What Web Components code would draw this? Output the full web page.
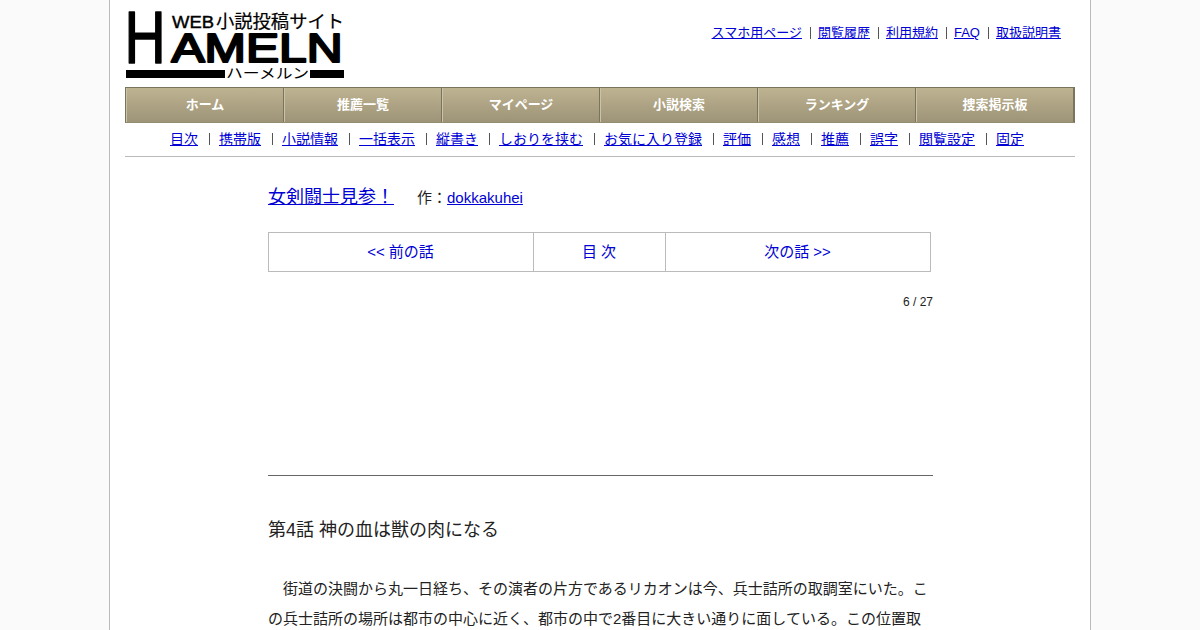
<!DOCTYPE html>
<html lang="ja">
<head>
<meta charset="utf-8">
<title>女剣闘士見参! - 第4話 神の血は獣の肉になる</title>
<style>
	html {
		overflow: hidden;
	}
	body {
		margin: 0;
		background: #fafafa;
		color: #222;
		font: 15px/1.5 "Liberation Sans", "Noto Sans CJK JP", sans-serif;
	}
</style>
</head>
<body>
<hm-page>
	<hm-header slot="header">
		<hm-logo></hm-logo>
		<hm-links links="スマホ用ページ,閲覧履歴,利用規約,FAQ,取扱説明書"></hm-links>
	</hm-header>
	<hm-menu slot="header" items="ホーム,推薦一覧,マイページ,小説検索,ランキング,捜索掲示板"></hm-menu>
	<hm-links slot="header" class="sub" links="目次,携帯版,小説情報,一括表示,縦書き,しおりを挟む,お気に入り登録,評価,感想,推薦,誤字,閲覧設定,固定"></hm-links>
	<hm-title author="dokkakuhei">女剣闘士見参！</hm-title>
	<hm-pager></hm-pager>
	<hm-chapter count="6 / 27">
		<span slot="heading">第4話 神の血は獣の肉になる</span>
		　街道の決闘から丸一日経ち、その演者の片方であるリカオンは今、兵士詰所の取調室にいた。この兵士詰所の場所は都市の中心に近く、都市の中で2番目に大きい通りに面している。この位置取
	</hm-chapter>
</hm-page>
<script>
(function() {
	function define(name, html, setup) {
		const template = document.createElement("template");
		template.innerHTML = html;
		customElements.define(name, class extends HTMLElement {
			constructor() {
				super();
				this.attachShadow({mode: "open"});
				this.shadowRoot.appendChild(template.content.cloneNode(true));
			}

			connectedCallback() {
				if (setup) {
					setup(this, this.shadowRoot);
				}
			}
		});
	}

	function fillLinks(root, list) {
		root.querySelector("nav").replaceChildren(...list.split(",").map(function(text) {
			const a = document.createElement("a");
			a.href = "#";
			a.textContent = text;
			return a;
		}));
	}

	define("hm-page", `
		<style>
		:host {
			display: block;
			box-sizing: border-box;
			width: 982px;
			height: 630px;
			margin: 0 auto;
			padding: 0 15px;
			overflow: hidden;
			border: solid #bbb;
			border-width: 0 1px;
			background: #fff;
		}
		main {
			width: 665px;
			margin: 0 142px 0 143px;
		}
		</style>
		<slot name="header"></slot>
		<main><slot></slot></main>
	`);

	define("hm-header", `
		<style>
		:host {
			display: flex;
			justify-content: space-between;
			align-items: flex-start;
			height: 87px;
		}
		::slotted(hm-links) {
			margin: 23px 14px 0 0;
		}
		</style>
		<slot></slot>
	`);

	define("hm-logo", `
		<style>
		:host {
			display: block;
			width: 220px;
			height: 87px;
		}
		svg {
			display: block;
			overflow: visible;
		}
		text {
			font-family: "Liberation Sans", "Noto Sans CJK JP", sans-serif;
		}
		.latin {
			font-family: "Liberation Sans", sans-serif;
			stroke: #000;
			stroke-linejoin: round;
		}
		</style>
		<svg width="220" height="87" viewBox="0 0 220 87">
			<text class="latin" transform="translate(-.5 63.3) scale(.76 1)" font-size="75" stroke-width="1.6">H</text>
			<text class="latin" x="46.5" y="61.8" font-size="41" textLength="171" lengthAdjust="spacingAndGlyphs" stroke-width="2.2">AMELN</text>
			<text x="47" y="28" font-size="17" textLength="42" lengthAdjust="spacingAndGlyphs" stroke="#000" stroke-width=".4">WEB</text>
			<text x="91" y="28" font-size="18" textLength="128" lengthAdjust="spacingAndGlyphs" stroke="#000" stroke-width=".2">小説投稿サイト</text>
			<rect x="1" y="70" width="99" height="8"/>
			<text x="101" y="78" font-size="14" textLength="83" lengthAdjust="spacingAndGlyphs">ハーメルン</text>
			<rect x="185" y="70" width="34" height="8"/>
		</svg>
	`);

	define("hm-links", `
		<style>
		:host {
			display: block;
			font-size: 13px;
			line-height: 20px;
		}
		nav {
			display: flex;
			justify-content: center;
		}
		a {
			display: flex;
			align-items: center;
			color: #0000d4;
			text-decoration: underline;
		}
		a + a::before {
			content: "";
			width: 1px;
			height: 12px;
			margin: 0 7px 0 8px;
			background: #555;
		}
		:host(.sub) {
			height: 33px;
			font-size: 14px;
			line-height: 32px;
			border-bottom: 1px solid #bbb;
		}
		:host(.sub) nav {
			justify-content: flex-start;
			padding-left: 45px;
		}
		:host(.sub) a + a::before {
			margin: 0 9px 0 11px;
		}
		</style>
		<nav></nav>
	`, (host, root) => fillLinks(root, host.getAttribute("links")));

	define("hm-menu", `
		<style>
		:host {
			display: block;
		}
		nav {
			display: flex;
			box-sizing: border-box;
			height: 36px;
			border: 1px solid #7b745d;
			border-bottom-color: #948b70;
			background: linear-gradient(#beb391, #9d9377);
		}
		a {
			box-sizing: border-box;
			width: 158px;
			border-left: 1px solid #cbc3a8;
			border-right: 1px solid #7b745d;
			color: #fff;
			font-size: 13px;
			font-weight: bold;
			line-height: 34px;
			text-align: center;
			text-decoration: none;
		}
		</style>
		<nav></nav>
	`, (host, root) => fillLinks(root, host.getAttribute("items")));

	define("hm-title", `
		<style>
		:host {
			display: flex;
			align-items: baseline;
			height: 48px;
			margin-top: 27px;
		}
		a {
			color: #0000d4;
		}
		.title {
			font-size: 18px;
			margin-right: 23px;
		}
		</style>
		<a class="title" href="#"><slot></slot></a>
		<span>作：<a class="author" href="#"></a></span>
	`, (host, root) => {
		root.querySelector(".author").textContent = host.getAttribute("author");
	});

	define("hm-pager", `
		<style>
		:host {
			display: block;
		}
		nav {
			display: flex;
			box-sizing: border-box;
			width: 663px;
			height: 40px;
			border: 1px solid #bbb;
		}
		a {
			box-sizing: border-box;
			width: 132px;
			padding-right: 1px;
			color: #0000d4;
			line-height: 38px;
			text-align: center;
			text-decoration: none;
			border-right: 1px solid #bbb;
		}
		a:first-child {
			width: 265px;
		}
		a:last-child {
			flex: 1;
			border: 0;
		}
		</style>
		<nav>
			<a href="#">&lt;&lt; 前の話</a>
			<a href="#">目 次</a>
			<a href="#">次の話 &gt;&gt;</a>
		</nav>
	`);

	define("hm-chapter", `
		<style>
		:host {
			display: block;
			line-height: 30px;
		}
		.count {
			height: 188px;
			padding-top: 15px;
			font-size: 12px;
			text-align: right;
		}
		hr {
			margin: 0;
			border: 0;
			border-top: 1px solid #666;
		}
		h1 {
			margin: 39px 0 29px;
			font-size: 18px;
			font-weight: normal;
		}
		p {
			margin: 0;
		}
		</style>
		<div class="count"></div>
		<hr>
		<h1><slot name="heading"></slot></h1>
		<p><slot></slot></p>
	`, (host, root) => {
		root.querySelector(".count").textContent = host.getAttribute("count");
	});
})();
</script>
</body>
</html>
